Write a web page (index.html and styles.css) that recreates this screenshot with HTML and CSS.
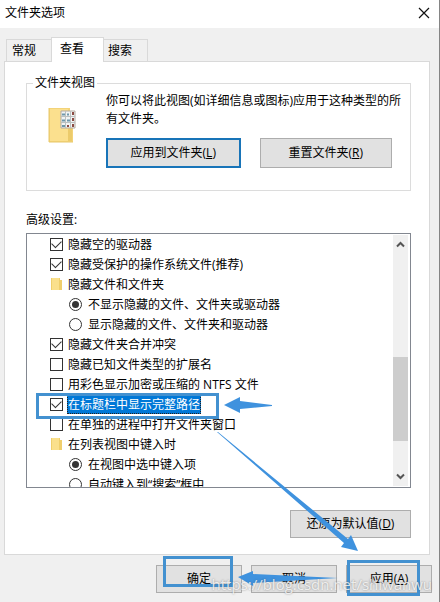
FILE: index.html
```html
<!DOCTYPE html>
<html lang="zh-CN">
<head>
    <meta charset="UTF-8">
    <meta name="viewport" content="width=device-width, initial-scale=1.0">
    <title>文件夹选项</title>
    <link rel="stylesheet" href="styles.css">
</head>
<body>
    <div class="dialog">
        <header class="titlebar">
            <h1>文件夹选项</h1>
            <button class="close" aria-label="关闭">
                <svg width="12" height="12" viewBox="0 0 12 12"><path d="M1 1L11 11M11 1L1 11" stroke="#111" stroke-width="1.2"/></svg>
            </button>
        </header>

        <nav class="tabs">
            <button class="tab">常规</button>
            <button class="tab active">查看</button>
            <button class="tab">搜索</button>
        </nav>

        <main class="panel">
            <fieldset class="views">
                <legend>文件夹视图</legend>
                <svg class="folder" width="28" height="36" viewBox="0 0 28 36">
                    <path d="M1 1h21v3h3v31H1z" fill="#f3d379"/>
                    <path d="M2 2h18v32H2z" fill="#fbe08e"/>
                    <path d="M20 22h4v12h-4z" fill="#eccb6b"/>
                    <path d="M1 1v34h24" fill="none" stroke="#e8c86a"/>
                    <path d="M13 4h14v17H13z" fill="#f1f4f4" stroke="#b3aaa0"/>
                    <path d="M13 9.500h14M13 15.500h14M17.500 4v17M22.500 4v17" stroke="#bcc0c0"/>
                    <path d="M14 7.500h3M19 7.500h2M14 13.500h3M19 13.500h3M14 19h3" stroke="#6f98ab" stroke-width="2"/>
                    <path d="M25 5v3M25 11v3M25 17v3M20 18v2" stroke="#8c4b43" stroke-width="2"/>
                </svg>
                <div class="views-body">
                    <p>你可以将此视图(如详细信息或图标)应用于这种类型的所有文件夹。</p>
                    <div class="views-buttons">
                        <button class="btn default">应用到文件夹(<u>L</u>)</button>
                        <button class="btn">重置文件夹(<u>R</u>)</button>
                    </div>
                </div>
            </fieldset>

            <h2>高级设置:</h2>
            <div class="settings">
                <ul class="options">
                    <li><label><input type="checkbox" checked><span>隐藏空的驱动器</span></label></li>
                    <li><label><input type="checkbox" checked><span>隐藏受保护的操作系统文件(推荐)</span></label></li>
                    <li class="group">
                        <svg width="13" height="14" viewBox="0 0 13 14"><path d="M1 1h9v2h2v10H1z" fill="#f0cf6c"/><path d="M2 1h7v12H2z" fill="#fae08c"/></svg>
                        <span>隐藏文件和文件夹</span>
                    </li>
                    <li class="sub"><label><input type="radio" name="hidden" checked><span>不显示隐藏的文件、文件夹或驱动器</span></label></li>
                    <li class="sub"><label><input type="radio" name="hidden"><span>显示隐藏的文件、文件夹和驱动器</span></label></li>
                    <li><label><input type="checkbox" checked><span>隐藏文件夹合并冲突</span></label></li>
                    <li><label><input type="checkbox"><span>隐藏已知文件类型的扩展名</span></label></li>
                    <li><label><input type="checkbox"><span>用彩色显示加密或压缩的 NTFS 文件</span></label></li>
                    <li class="selected"><label><input type="checkbox" checked><span>在标题栏中显示完整路径</span></label></li>
                    <li><label><input type="checkbox"><span>在单独的进程中打开文件夹窗口</span></label></li>
                    <li class="group">
                        <svg width="13" height="14" viewBox="0 0 13 14"><path d="M1 1h9v2h2v10H1z" fill="#f0cf6c"/><path d="M2 1h7v12H2z" fill="#fae08c"/></svg>
                        <span>在列表视图中键入时</span>
                    </li>
                    <li class="sub"><label><input type="radio" name="typing" checked><span>在视图中选中键入项</span></label></li>
                    <li class="sub"><label><input type="radio" name="typing"><span>自动键入到“搜索”框中</span></label></li>
                </ul>
                <div class="scrollbar">
                    <svg width="9" height="7" viewBox="0 0 9 7"><path d="M1 5.500L4.500 2L8 5.500" fill="none" stroke="#555" stroke-width="2"/></svg>
                    <div class="thumb"></div>
                    <svg width="9" height="7" viewBox="0 0 9 7"><path d="M1 1.500L4.500 5L8 1.500" fill="none" stroke="#555" stroke-width="2"/></svg>
                </div>
            </div>

            <button class="btn restore">还原为默认值(<u>D</u>)</button>
        </main>

        <footer class="actions">
            <button class="btn">确定</button>
            <button class="btn">取消</button>
            <button class="btn">应用(<u>A</u>)</button>
        </footer>

        <!-- tutorial marks drawn over the dialog -->
        <svg class="marks" width="440" height="602" viewBox="0 0 440 602">
            <g fill="none" stroke="#4391d0" stroke-width="3">
                <path d="M37.500 394.500h180v23h-180z"/>
                <path d="M164.500 557.500h67v28h-67z"/>
                <path d="M348.500 561.500h70v33h-70z"/>
            </g>
            <g fill="#3f92de">
                <path d="M224 405L240 397V401L272 405V406L240 409V413z"/>
                <path d="M217 432L218 432L348 539L351 535L358 551L341 547L344 543z"/>
                <path d="M238 577L253 571V574L338 578L253 583V586z"/>
            </g>
        </svg>
        <div class="watermark">https://blog.csdn.net/shiwanwu</div>
    </div>
</body>
</html>
```
FILE: styles.css
```css
* {
    box-sizing: border-box;
}

body {
    margin: 0;
    background-color: #f0f0f0;
    color: #000;
    font-family: "Open Sans", "Noto Sans CJK SC", sans-serif;
    font-size: 12px;
    line-height: 18px;
}

button {
    font: inherit;
    color: inherit;
    padding: 0;
    cursor: pointer;
}

h1, h2, p {
    margin: 0;
    font-size: 12px;
    font-weight: normal;
}

.dialog {
    position: relative;
    min-height: 100vh;
    border-right: 1px solid #858585;
}

.titlebar {
    display: flex;
    justify-content: space-between;
    align-items: center;
    height: 28px;
    padding: 0 9px 3px 5px;
    background: #fff;
}

.close {
    display: flex;
    border: none;
    background: none;
}

.tabs {
    display: flex;
    align-items: flex-end;
    height: 33px;
    padding-left: 6px;
}

.tab {
    height: 22px;
    padding: 0 15px 0 5px;
    border: 1px solid #d9d9d9;
    border-bottom: none;
    background: #f0f0f0;
}

.tab.active {
    position: relative;
    height: 25px;
    margin: 0 -2px -1px -1px;
    padding: 0 19px 2px 8px;
    background: #fff;
}

.panel {
    display: flex;
    flex-direction: column;
    margin: 0 9px 0 4px;
    padding: 12px 18px 16px 21px;
    border: 1px solid #d9d9d9;
    background: #fff;
}

.views {
    display: flex;
    gap: 25px;
    min-width: 0;
    margin: 0;
    padding: 0 18px 22px 21px;
    border: 1px solid #dcdcdc;
}

.views legend {
    margin-left: -15px;
    padding: 0 2px;
}

.folder {
    flex: none;
    margin-top: 15px;
}

.views-body {
    flex: 1;
    margin-left: 5px;
}

.views-body p {
    margin-right: -14px;
}

.views-buttons {
    display: flex;
    gap: 19px;
    margin-top: 10px;
}

.btn {
    height: 28px;
    border: 1px solid #adadad;
    background: #e1e1e1;
}

.views-buttons .btn {
    flex: 1;
    height: 30px;
}

.btn.default {
    border: 2px solid #1874b8;
}

h2 {
    margin-top: 20px;
}

.settings {
    display: flex;
    height: 255px;
    margin-top: 4px;
    padding-right: 2px;
    border: 1px solid #828790;
}

.options {
    flex: 1;
    margin: 0;
    padding: 0 0 0 23px;
    list-style: none;
    overflow: hidden;
}

.options li, .options label {
    display: flex;
    align-items: center;
    height: 20px;
}

.options .sub {
    padding-left: 19px;
}

.options input {
    appearance: none;
    flex: none;
    width: 13px;
    height: 13px;
    margin: 0 4px 0 0;
    border: 1px solid #333;
    background: #fff;
}

.options input[type="checkbox"]:checked::before {
    content: "";
    display: block;
    width: 9px;
    height: 5px;
    margin: 2px 1px;
    border: solid #333;
    border-width: 0 0 1px 1px;
    transform: rotate(-45deg);
}

.options input[type="checkbox"] {
    display: flex;
    align-items: flex-start;
}

.options input[type="checkbox"]:checked::before {
    margin-top: 1px;
}

.options input[type="radio"] {
    margin-right: 5px;
    border-radius: 50%;
}

.options input[type="radio"]:checked::before {
    content: "";
    display: block;
    width: 7px;
    height: 7px;
    margin: 2px;
    border-radius: 50%;
    background: #333;
}

.options span {
    padding: 1px 1px 0;
    line-height: 18px;
    white-space: nowrap;
}

.group svg {
    margin-right: 4px;
}

.selected span {
    background: #0078d7;
    color: #fff;
    outline: 1px dotted #222;
    outline-offset: -1px;
}

.scrollbar {
    display: flex;
    flex-direction: column;
    align-items: center;
    width: 15px;
    padding: 6px 0;
    margin: 1px 0;
    background: #f0f0f0;
}

.thumb {
    width: 100%;
    height: 84px;
    margin: auto 0 32px;
    background: #cdcdcd;
}

.restore {
    align-self: flex-end;
    width: 121px;
    margin-top: 22px;
}

.actions {
    display: flex;
    justify-content: flex-end;
    gap: 9px;
    padding: 10px 7px 9px 0;
}

.actions .btn {
    width: 86px;
}

.marks {
    position: absolute;
    top: 0;
    left: 0;
    pointer-events: none;
}

.watermark {
    position: absolute;
    right: 7px;
    bottom: 9px;
    color: rgba(255, 255, 255, 0.8);
    font-family: "Open Sans", sans-serif;
    font-size: 15px;
    text-shadow: 0 0 2px rgba(70, 70, 70, 0.6);
    pointer-events: none;
}
```
